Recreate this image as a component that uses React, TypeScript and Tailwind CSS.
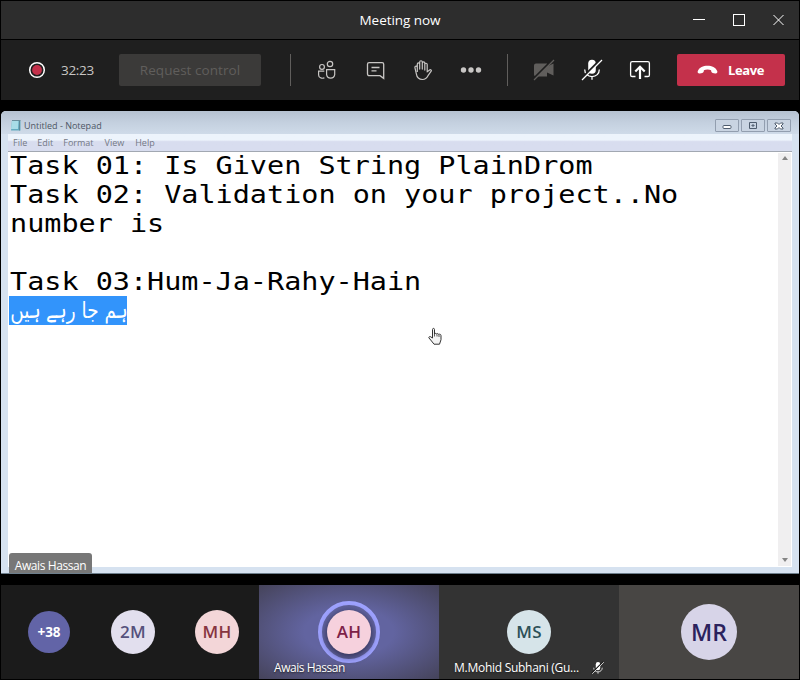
import type { ReactNode } from "react";

const UI = "font-['Open_Sans','Noto_Sans',sans-serif]";

function Tool({ children }: { children: ReactNode }) {
  return (
    <button className="flex h-8 w-12 shrink-0 items-center justify-center">
      <svg width="24" height="24" viewBox="0 0 24 24" fill="none">
        {children}
      </svg>
    </button>
  );
}

function TitleBar() {
  return (
    <header className="flex h-[38px] shrink-0 items-center bg-[#2d2d2d]">
      <div className="w-[120px]" />
      <h1 className="flex-1 pt-px text-center text-[13.5px] font-normal tracking-[-0.05px] text-white">Meeting now</h1>
      <svg className="shrink-0" width="120" height="38" fill="none" stroke="#fff" shapeRendering="crispEdges">
        <path d="M14 18.5h12M54.5 13.5h11v11h-11z" />
        <path d="M94.5 14l10 10M104.5 14l-10 10" shapeRendering="auto" />
      </svg>
    </header>
  );
}

function Toolbar() {
  return (
    <div className="mt-px flex h-[60px] shrink-0 items-center bg-[#1f1f1f]">
      <svg className="ml-[27px] shrink-0" width="18" height="18" viewBox="0 0 18 18">
        <circle cx="9" cy="9" r="7.3" fill="none" stroke="#fff" strokeWidth="1.5" />
        <circle cx="9" cy="9" r="4.9" fill="#c4314b" />
      </svg>
      <span className="ml-[15px] w-[34px] pt-px text-[13.5px] tracking-[-0.3px] text-[#c8c6c4]">32:23</span>
      <button className="ml-6 h-8 w-[142px] shrink-0 rounded-[2px] bg-[#3b3a39] text-[13.5px] tracking-[0.05px] text-[#605e5c]">
        Request control
      </button>
      <div className="mr-3 ml-[29px] h-8 w-px shrink-0 bg-[#605e5c]" />
      <Tool>
        <g stroke="#c8c6c4" strokeWidth="1.2">
          <circle cx="7" cy="8.9" r="2.4" />
          <circle cx="15" cy="6" r="2.7" />
          <path d="M11.6 11.6h8.1v5.1a4.1 4.1 0 0 1-8.1 0zM9.3 13.2H3.6v3.7c0 2.6 3.3 4.2 5.8 2.8" />
        </g>
      </Tool>
      <Tool>
        <g stroke="#c8c6c4" strokeWidth="1.3">
          <path d="M6.100 4.700h13a1.600 1.600 0 0 1 1.600 1.600v14.100l-3.700-2.700H6.100a1.600 1.600 0 0 1-1.600-1.600V6.300a1.600 1.600 0 0 1 1.600-1.600z" />
          <path d="M8.500 9.500h8M8.500 12.800h5" />
        </g>
      </Tool>
      <Tool>
        <path
          d="M7.300 14V6.200c0-1.800 2.400-1.800 2.400 0v4.900-7c0-1.800 2.600-1.800 2.600 0v7-6c0-1.700 2.500-1.700 2.500 0v7V6.500c0-1.700 2.400-1.700 2.400.1v7.300l2.400-1.900c1-.7 2.300.2 1.600 1.100l-3.200 4.600c-1.200 2.400-2.900 3.800-5.500 3.800-3.500 0-5.600-2-6.100-5.300L4.900 9.500c-.2-1.600 2.100-1.900 2.400-.4"
          transform="translate(-1 0)"
          stroke="#c8c6c4"
          strokeWidth="1.2"
          strokeLinejoin="round"
        />
      </Tool>
      <Tool>
        <g fill="#c8c6c4">
          <circle cx="4.5" cy="12" r="2.7" />
          <circle cx="12" cy="12" r="2.7" />
          <circle cx="19.5" cy="12" r="2.7" />
        </g>
      </Tool>
      <div className="mr-3 ml-3 h-8 w-px shrink-0 bg-[#605e5c]" />
      <Tool>
        <path d="M4 5.500h11v3l6.500-3v12l-6.500-3v4H4a2 2 0 0 1-2-2v-9a2 2 0 0 1 2-2z" fill="#605e5c" />
        <path d="M1 21.300L21.300 1" stroke="#1f1f1f" strokeWidth="2" />
        <path d="M2 22L22 2" stroke="#605e5c" strokeWidth="1.200" />
      </Tool>
      <Tool>
        <MicOff />
      </Tool>
      <Tool>
        <path
          d="M7.500 18.500H4.200a1.600 1.600 0 0 1-1.600-1.600V5.200a1.600 1.600 0 0 1 1.600-1.600h15.600a1.600 1.600 0 0 1 1.600 1.600v11.700a1.600 1.600 0 0 1-1.600 1.600h-3.300"
          stroke="#fff"
          strokeWidth="1.300"
        />
        <path d="M12 21V9.500M7.300 13.500L12 8.800l4.700 4.700" stroke="#fff" strokeWidth="2.200" />
      </Tool>
      <button className="ml-[13px] flex h-8 w-[108px] shrink-0 items-center rounded-[2px] bg-[#c4314b] pl-5 text-[13px] font-bold tracking-[-0.4px] text-white">
        <svg className="mr-[10px]" width="21" height="10" viewBox="0 0 21 10" fill="#fff">
          <path d="M.8 6C2.500 2.300 6 .8 10.500.8S18.500 2.300 20.200 6c.6 1.700-.4 2.700-2.100 2.400l-2.400-.5c-1.200-.3-1.500-1.200-1.600-2.700-2-.8-5.200-.8-7.200 0-.1 1.500-.4 2.400-1.600 2.700l-2.400.5C1.200 8.700.2 7.700.8 6z" />
        </svg>
        <span className="pt-px">Leave</span>
      </button>
    </div>
  );
}

function MicOff() {
  return (
    <>
      <rect x="8.200" y="1.800" width="7.600" height="14" rx="3.800" fill="#fff" />
      <path d="M4.700 11.500c0 4.200 3 7.100 7.300 7.100s7.300-2.900 7.300-7.100M12 18.600v3.200" stroke="#fff" strokeWidth="1.300" />
      <path d="M.8 21.300L21 1.100" stroke="#1f1f1f" strokeWidth="2.200" />
      <path d="M2 22L22 2" stroke="#fff" strokeWidth="1.300" />
    </>
  );
}

function CaptionButton({ children }: { children: ReactNode }) {
  return (
    <div className="flex h-[13px] w-6 items-center justify-center rounded-[1px] border border-[#929eaf] bg-[#c9d4e2]">
      <svg width="12" height="10" viewBox="0 0 12 10" fill="none" stroke="#4e5c6e">
        {children}
      </svg>
    </div>
  );
}

function Notepad() {
  return (
    <section className="relative mt-[11px] flex h-[463px] shrink-0 flex-col rounded-t-[5px] border-b border-[#6d7e8c] bg-[#d6e2f0] pr-[7px] pl-[7px]">
      <div className="-mx-[7px] flex h-[23px] shrink-0 items-center rounded-t-[5px] bg-linear-to-b from-[#b5c1d0] via-[#c4d0df] to-[#cfdbe9] pt-[6px] pl-[9px]">
        <svg width="12" height="13" viewBox="0 0 12 13">
          <path d="M2 1.500h8.500v10H1z" fill="#64abc0" />
          <path d="M2 2h6.500L8 10H1z" fill="#a8dce7" />
          <path d="M2 1.500h8.500M9.500 2v9.500" stroke="#587a88" strokeOpacity=".7" />
        </svg>
        <span className="ml-[2px] flex-1 text-[9px] text-[#4e5764]">Untitled - Notepad</span>
        <div className="mr-2 flex gap-0.5">
          <CaptionButton><rect x="2" y="4.500" width="8" height="3" rx="1" fill="#fff" /></CaptionButton>
          <CaptionButton><path d="M2.500 1.500h7v6h-7zM5 4h2v1H5z" /></CaptionButton>
          <CaptionButton><path d="M2 2h2.500L6 3.500 7.500 2H10v1L8 5l2 2v1H7.500L6 6.500 4.500 8H2V7l2-2-2-2z" fill="#fff" /></CaptionButton>
        </div>
      </div>
      <nav className="flex h-[17px] shrink-0 items-center gap-[10px] bg-linear-to-b from-[#edf4fc] from-35% to-[#d8ddef] to-45% pl-[5px] text-[9px] text-[#747985]">
        <span>File</span><span>Edit</span><span>Format</span><span className="ml-px">View</span><span className="ml-px">Help</span>
      </nav>
      <div className="mb-[6px] flex min-h-0 flex-1 border-t border-[#a2a8b2] bg-white">
        <div className="-mt-px flex-1 pl-px font-['DejaVu_Sans_Mono','Liberation_Mono',monospace] text-[25.5px] leading-[29px] whitespace-pre text-black">
          <div className="ml-px w-[620px] origin-left scale-x-[1.116]">
            <p>Task 01: Is Given String PlainDrom</p>
            <p>Task 02: Validation on your project..No</p>
            <p>number is</p>
            <p className="h-[29px]" />
            <p>Task 03:Hum-Ja-Rahy-Hain</p>
          </div>
          <p dir="rtl" className="h-[29px] w-[118px] bg-[#3294fb] font-['DejaVu_Sans',sans-serif] text-[23px] text-white">
            <span className="inline-block origin-right scale-x-[0.8]">ہم جا رہے ہیں</span>
          </p>
        </div>
        <div className="my-px mr-px flex w-[13px] flex-col items-center justify-between bg-[#f0eff0] pt-[3px] pb-1">
          <svg width="6" height="4"><path d="M0 4L3 0l3 4z" fill="#858585" /></svg>
          <svg width="6" height="4"><path d="M0 0h6L3 4z" fill="#858585" /></svg>
        </div>
      </div>
      <svg className="absolute top-[216px] left-[427px]" width="16" height="19" viewBox="0 0 16 19">
        <path d="M4.500 11V2.500c0-1.500 2-1.500 2 0V7l.8-.8 1.500.8.6-.5 1.500 1 .6-.3c1 0 1.500.5 1.500 1.500v4l-1.500 4.500H6L3.500 14 1 11c-.8-1 1-2 2-1z" fill="#f4f4f4" stroke="#333" />
        <path d="M6.500 7v2.500M9 7.500v2M11 8v2" stroke="#333" strokeWidth=".8" />
      </svg>
      <div className="absolute bottom-0 left-2 flex h-5 w-[83px] items-center justify-center rounded-t-[3px] bg-[#777777] pt-[6px] text-[12px] tracking-[-0.400px] whitespace-nowrap text-white">Awais Hassan</div>
    </section>
  );
}

function Avatar({ className, children }: { className: string; children: ReactNode }) {
  return <div className={`flex shrink-0 items-center justify-center rounded-full ${className}`}>{children}</div>;
}

function Participants() {
  return (
    <footer className="mt-[11px] flex h-[94px] shrink-0 bg-[#1b1b1b]">
      <div className="flex w-[258px] items-center pl-[27px]">
        <Avatar className="size-[42px] bg-[#6264a7] text-[13.5px] font-bold text-white">+38</Avatar>
        <Avatar className="ml-[41px] size-11 bg-[#e2dfee] text-[17px] font-semibold tracking-[0.300px] text-[#55517c]">2M</Avatar>
        <Avatar className="ml-10 size-11 bg-[#f3d6d8] text-[17px] font-semibold tracking-[0.300px] text-[#87343f]">MH</Avatar>
      </div>
      <div className="relative flex w-[180px] items-center justify-center bg-[radial-gradient(ellipse_at_center,#6264a0_35%,#45435a_100%)]">
        <div className="flex size-[62px] items-center justify-center rounded-full border-[4px] border-[#9ea2ff]">
          <Avatar className="size-11 bg-[#f6d1dd] text-[17px] font-semibold tracking-[0.300px] text-[#7d2248] shadow-[0_2px_7px_1px_rgba(35,33,60,0.750)]">AH</Avatar>
        </div>
        <span className="absolute bottom-[2px] left-[15px] text-[12px] tracking-[-0.450px] text-white [text-shadow:0_1px_2px_#222]">Awais Hassan</span>
      </div>
      <div className="relative flex w-[180px] items-center justify-center bg-[#333333]">
        <Avatar className="size-11 bg-[#d6e4e9] text-[17px] font-semibold tracking-[0.300px] text-[#2c5058]">MS</Avatar>
        <div className="absolute bottom-[2px] left-[15px] flex w-[151px] items-center justify-between text-[12px] tracking-[-0.270px] whitespace-nowrap text-white [text-shadow:0_1px_2px_#222]">
          M.Mohid Subhani (Gu...
          <svg width="14" height="14" viewBox="0 0 24 24" fill="none"><MicOff /></svg>
        </div>
      </div>
      <div className="flex flex-1 items-center justify-center bg-[#484644]">
        <Avatar className="size-14 bg-[#d7d4e8] text-[23px] font-semibold text-[#2b225d]">MR</Avatar>
      </div>
    </footer>
  );
}

export default function App() {
  return (
    <main className={`flex h-[680px] w-[800px] flex-col overflow-hidden border border-black bg-black ${UI}`}>
      <TitleBar />
      <Toolbar />
      <Notepad />
      <Participants />
    </main>
  );
}
